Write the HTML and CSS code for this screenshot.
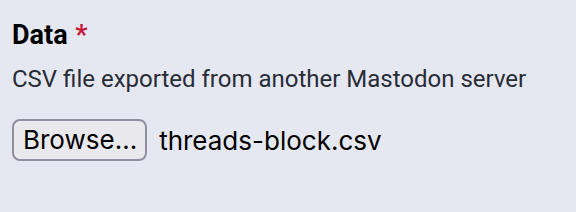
FILE: index.html
```html
<!DOCTYPE html>
<html>
  <head>
    <title>Import</title>
    <meta name="viewport" content="width=device-width,initial-scale=1">
    <link rel="stylesheet" href="styles.css">
  </head>
  <body>
    <form class="simple_form">
      <div class="input file required">
        <label class="label" for="import_data">Data <abbr title="required">*</abbr></label>
        <span class="hint">CSV file exported from another Mastodon server</span>
        <div class="file-picker">
          <span class="browse">Browse...</span>
          <span class="file-name">threads-block.csv</span>
        </div>
      </div>
    </form>
  </body>
</html>
```

FILE: styles.css
```css
body {
  margin: 0;
  background-color: #e5e8f0;
  color: #282c37;
  font-family: Roboto, "Noto Sans", sans-serif;
}
.simple_form {
  padding: 17px 12px;
}
.input {
  display: flex;
  flex-direction: column;
  align-items: flex-start;
}
.label {
  font-size: 27px;
  font-weight: 700;
  color: #000;
  line-height: 36px;
}
.label abbr {
  color: #c8193c;
  text-decoration: none;
  margin-left: 1px;
}
.hint {
  margin-top: 10px;
  font-size: 24px;
  line-height: 32px;
}
.file-picker {
  margin-top: 24px;
  display: flex;
  align-items: center;
  gap: 12px;
  font-family: Inter, "Liberation Sans", sans-serif;
  font-size: 26px;
  color: #000;
}
.browse {
  padding: 0 8px 0 9px;
  border: 2px solid #8f8f9d;
  border-radius: 8px;
  background: #e9e9ed;
  line-height: 38px;
}
```
